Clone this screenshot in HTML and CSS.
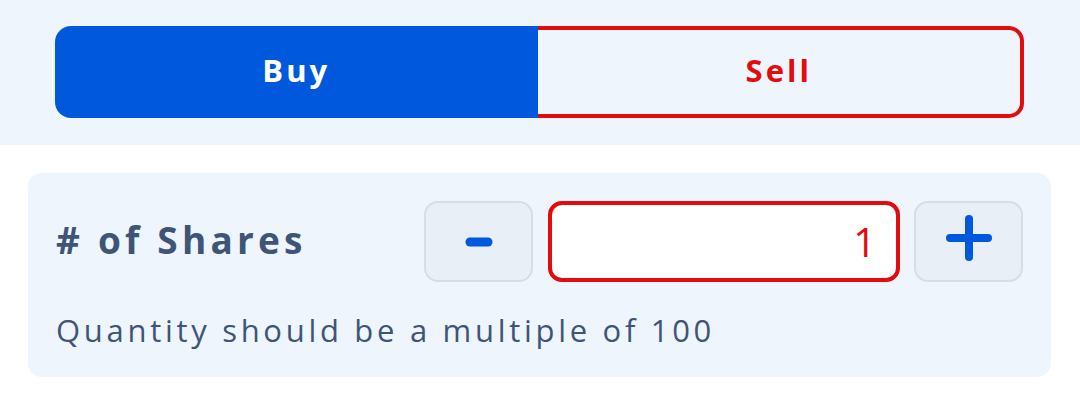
FILE: index.html
```html
<!DOCTYPE html>
<html lang="en">
<head>
    <meta charset="UTF-8">
    <meta name="viewport" content="width=device-width, initial-scale=1.0">
    <title>Order</title>
    <link rel="stylesheet" href="styles.css">
</head>
<body>

<div class="side-bar">
    <div class="side-toggle">
        <div class="side buy">Buy</div>
        <div class="side sell">Sell</div>
    </div>
</div>

<div class="qty-card">
    <div class="qty-row">
        <div class="qty-label"># of Shares</div>
        <div class="qty-controls">
            <div class="step minus">
                <svg width="28" height="10" viewBox="0 0 28 10">
                    <line x1="5" y1="5" x2="23" y2="5" stroke="#0058DD" stroke-width="9" stroke-linecap="round"/>
                </svg>
            </div>
            <div class="qty-input">1</div>
            <div class="step plus">
                <svg width="46" height="46" viewBox="0 0 46 46">
                    <line x1="4" y1="23" x2="42" y2="23" stroke="#0058DD" stroke-width="8" stroke-linecap="round"/>
                    <line x1="23" y1="4" x2="23" y2="42" stroke="#0058DD" stroke-width="8" stroke-linecap="round"/>
                </svg>
            </div>
        </div>
    </div>
    <p class="qty-hint">Quantity should be a multiple of 100</p>
</div>

</body>
</html>
```

FILE: styles.css
```css
body {
    margin: 0;
    background-color: #FFFFFF;
    font-family: "Open Sans", "Liberation Sans", sans-serif;
    color: #3E5578; /* slate text */
}

.side-bar {
    background-color: #EEF5FD; /* pale blue band */
    padding: 26px 56px 27px 55px;
}

.side-toggle {
    display: flex;
    height: 92px;
}

.side {
    flex: 1;
    display: flex;
    justify-content: center;
    align-items: center;
    box-sizing: border-box;
    padding-bottom: 5px;
    font-size: 31px;
    font-weight: 700;
    letter-spacing: 3px;
}

.side.buy {
    background-color: #0058DD;
    color: #FFFFFF;
    border-radius: 16px 0 0 16px;
}

.side.sell {
    color: #E30B0B;
    border: 4px solid #E30B0B;
    border-left: none;
    border-radius: 0 15px 15px 0;
}

.qty-card {
    background-color: #EEF5FD;
    margin: 28px 29px 0 28px;
    padding: 28px 28px 26px 28px;
    border-radius: 14px;
}

.qty-row {
    display: flex;
    justify-content: space-between;
    align-items: center;
}

.qty-label {
    font-size: 37px;
    font-weight: 700;
    letter-spacing: 4.2px;
    padding-bottom: 5px;
}

.qty-controls {
    display: flex;
    gap: 15px;
}

.step {
    width: 109px;
    height: 81px;
    box-sizing: border-box;
    display: flex;
    justify-content: center;
    align-items: center;
    background-color: #E8EFF7;
    border: 2px solid #D5DEE8;
    border-radius: 14px;
}

.step svg {
    display: block;
}

.step.plus {
    padding-bottom: 7px;
}

.qty-controls .plus {
    margin-left: -1px;
}

.qty-input {
    width: 352px;
    height: 81px;
    box-sizing: border-box;
    display: flex;
    justify-content: flex-end;
    align-items: center;
    padding-right: 20px;
    background-color: #FFFFFF;
    border: 4px solid #E30B0B;
    border-radius: 14px;
    color: #E30B0B;
    font-size: 40px;
    font-weight: 400;
}

.qty-hint {
    margin: 27px 0 0 0;
    font-size: 31px;
    letter-spacing: 3.7px;
}
```
